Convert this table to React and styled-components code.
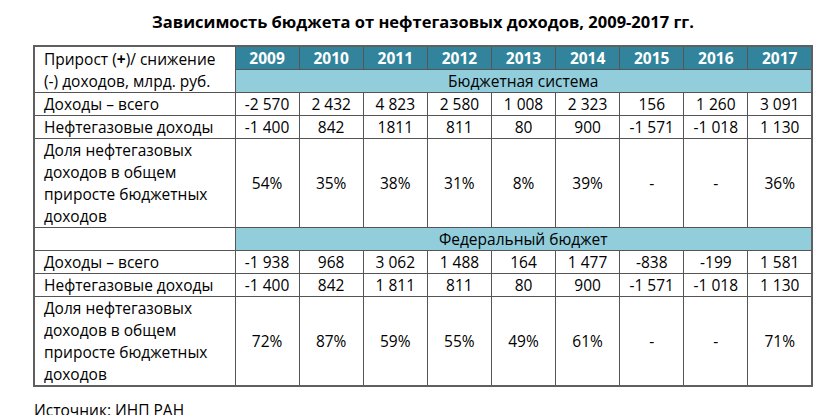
import React from 'react';
import styled, { createGlobalStyle } from 'styled-components';

const GlobalStyle = createGlobalStyle`
  body {
    margin: 0;
    background: #ffffff;
    font-family: "Open Sans", "Noto Sans", sans-serif;
    color: #000;
  }
`;

const DARK = '#31849b';
const LIGHT = '#92cddc';
const LINE = '#555';

const Page = styled.div`
  width: 833px;
  height: 415px;
  overflow: hidden;
  padding: 11px 0 0 33px;
  box-sizing: border-box;
`;

const Title = styled.h1`
  margin: 0 0 12px;
  width: 780px;
  text-align: center;
  font-size: 16.5px;
  line-height: 22px;
  font-weight: 700;
`;

const Table = styled.table`
  border-collapse: collapse;
  table-layout: fixed;
  width: 780px;
  font-size: 15.5px;
  border: 2px solid #5f5f5f;
`;

const Cell = styled.td`
  border: 1px solid ${LINE};
  padding: 0;
  height: 22px;
  line-height: 22px;
  text-align: ${p => (p.$label ? 'left' : 'center')};
  padding-left: ${p => (p.$label ? '9px' : '0')};
  white-space: ${p => (p.$wrap ? 'normal' : 'nowrap')};
  background: ${p => p.$bg || '#fff'};
  color: ${p => (p.$light ? '#fff' : '#000')};
  font-weight: ${p => (p.$bold ? 700 : 400)};
  vertical-align: middle;
`;

const Plus = styled.b`
  font-weight: 700;
`;

const Source = styled.p`
  margin: 13px 0 0 1px;
  font-size: 15.5px;
  line-height: 20px;
`;

const years = ['2009', '2010', '2011', '2012', '2013', '2014', '2015', '2016', '2017'];

const sections = [
  {
    name: 'Бюджетная система',
    total: ['-2 570', '2 432', '4 823', '2 580', '1 008', '2 323', '156', '1 260', '3 091'],
    oil: ['-1 400', '842', '1811', '811', '80', '900', '-1 571', '-1 018', '1 130'],
    share: ['54%', '35%', '38%', '31%', '8%', '39%', '-', '-', '36%'],
  },
  {
    name: 'Федеральный бюджет',
    total: ['-1 938', '968', '3 062', '1 488', '164', '1 477', '-838', '-199', '1 581'],
    oil: ['-1 400', '842', '1 811', '811', '80', '900', '-1 571', '-1 018', '1 130'],
    share: ['72%', '87%', '59%', '55%', '49%', '61%', '-', '-', '71%'],
  },
];

function DataRow({ label, values }) {
  return (
    <tr>
      <Cell $label>{label}</Cell>
      {values.map((v, i) => <Cell key={i}>{v}</Cell>)}
    </tr>
  );
}

export default function App() {
  return (
    <Page>
      <GlobalStyle />
      <Title>Зависимость бюджета от нефтегазовых доходов, 2009-2017 гг.</Title>
      <Table>
        <colgroup>
          <col style={{ width: 201 }} />
          {years.map(y => <col key={y} />)}
        </colgroup>
        <tbody>
          <tr>
            <Cell $label $wrap rowSpan={2}>
              Прирост (<Plus>+</Plus>)/ снижение<br />(-) доходов, млрд. руб.
            </Cell>
            {years.map(y => (
              <Cell key={y} $bg={DARK} $light $bold>{y}</Cell>
            ))}
          </tr>
          {sections.map((s, idx) => (
            <React.Fragment key={s.name}>
              <tr>
                {idx > 0 && <Cell />}
                <Cell colSpan={9} $bg={LIGHT}>{s.name}</Cell>
              </tr>
              <DataRow label="Доходы – всего" values={s.total} />
              <DataRow label="Нефтегазовые доходы" values={s.oil} />
              <tr>
                <Cell $label $wrap>
                  Доля нефтегазовых доходов в общем приросте бюджетных доходов
                </Cell>
                {s.share.map((v, i) => <Cell key={i}>{v}</Cell>)}
              </tr>
            </React.Fragment>
          ))}
        </tbody>
      </Table>
      <Source>Источник: ИНП РАН</Source>
    </Page>
  );
}
